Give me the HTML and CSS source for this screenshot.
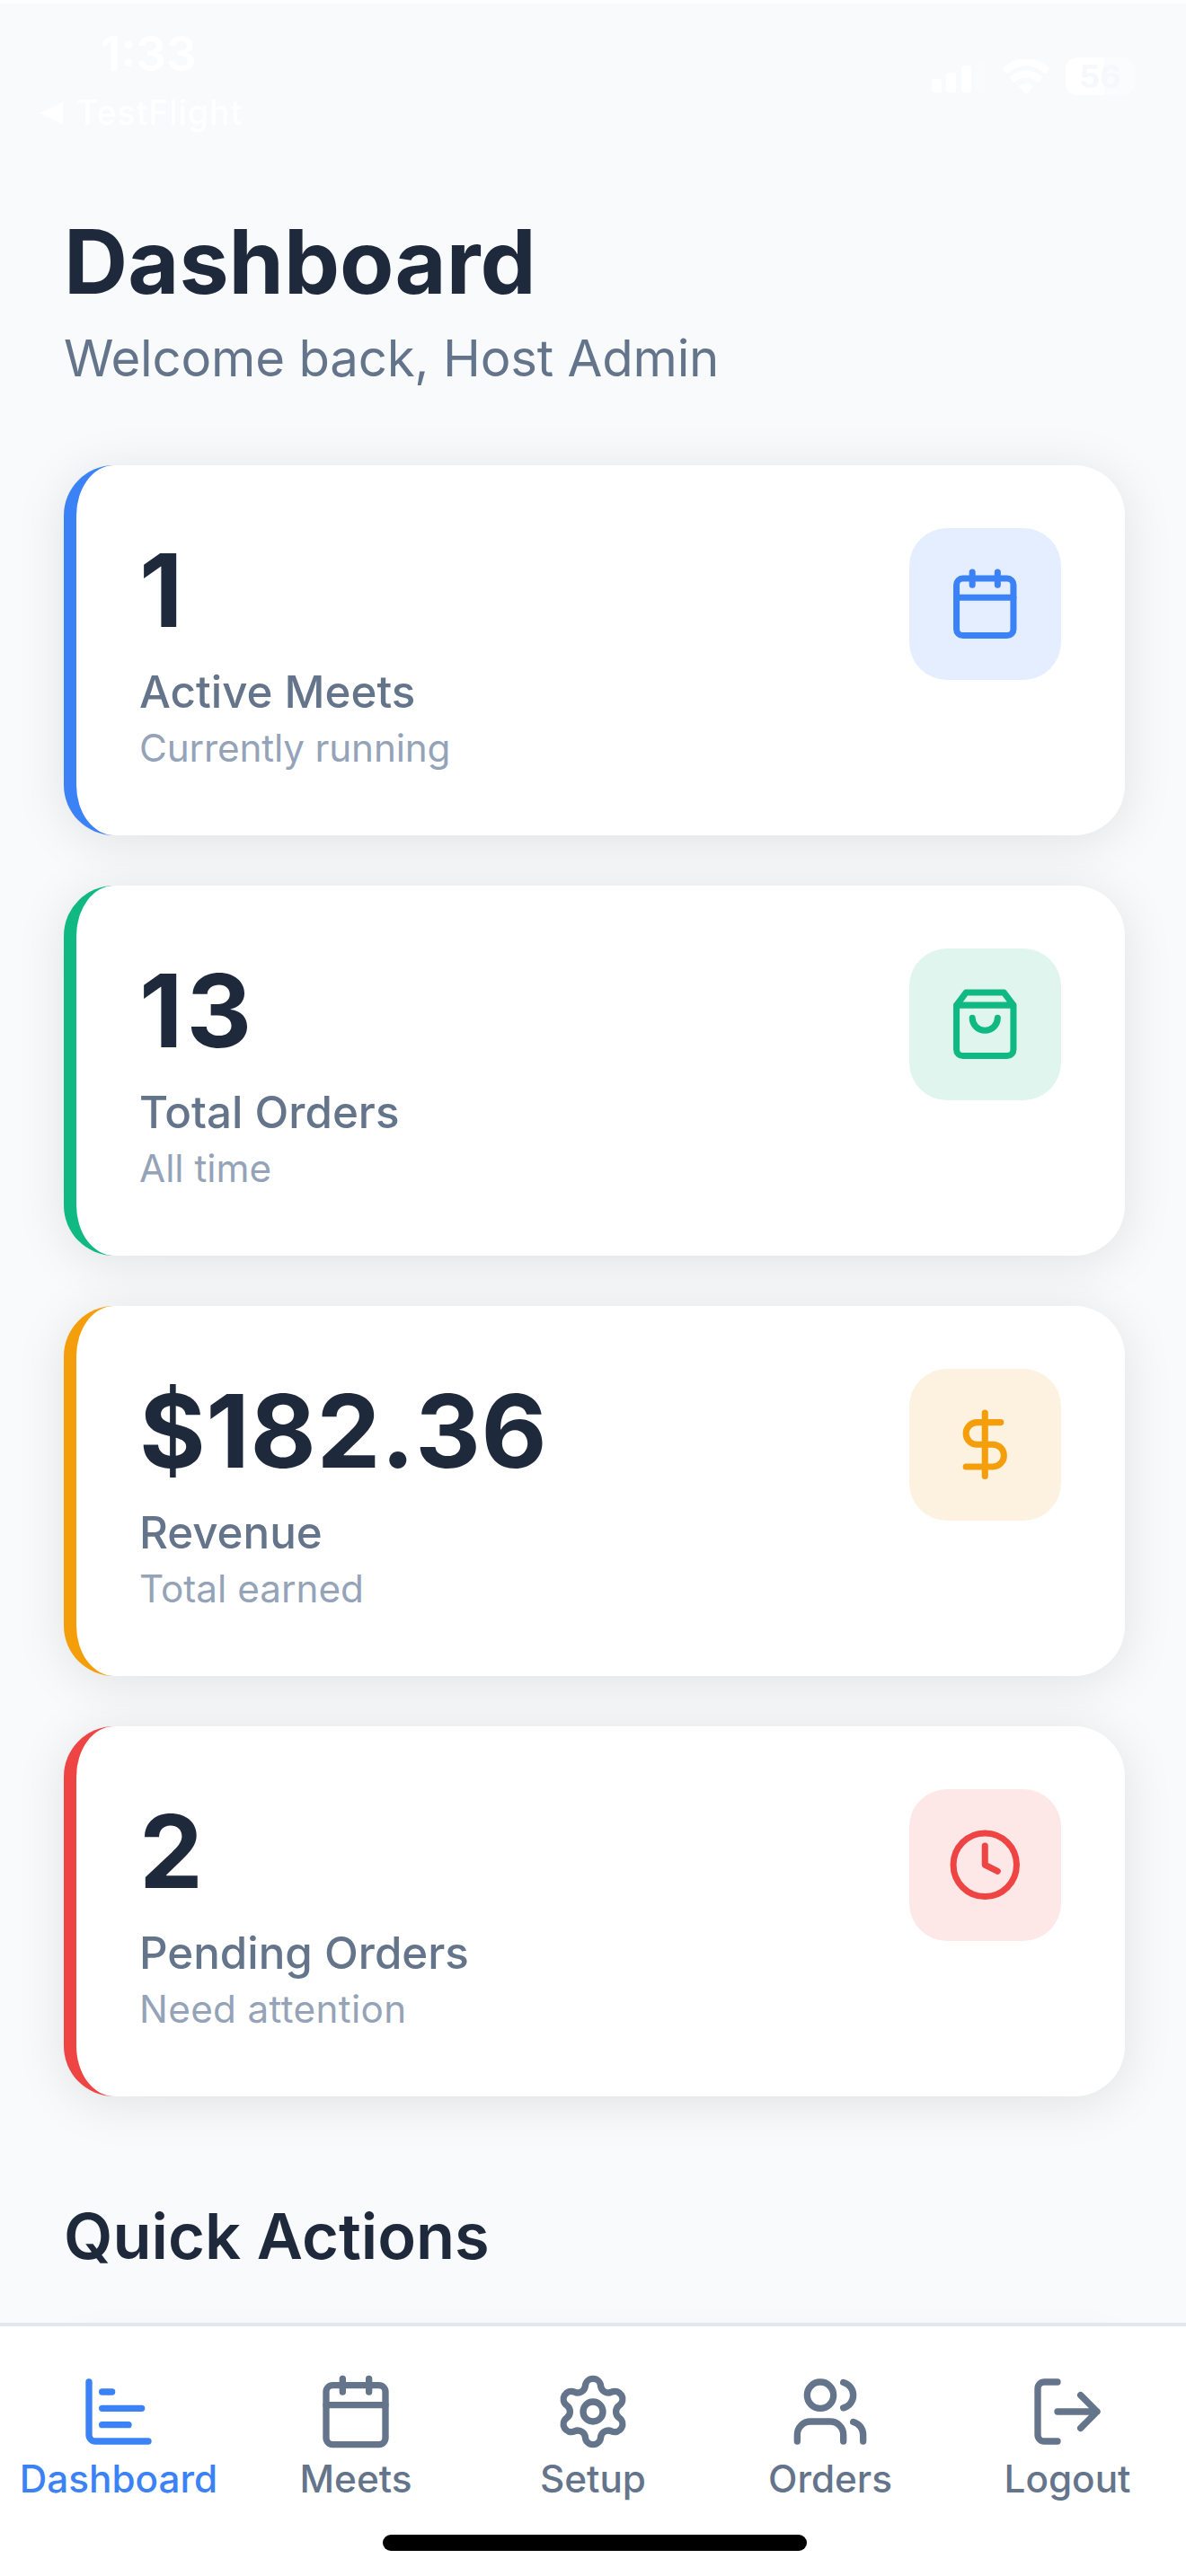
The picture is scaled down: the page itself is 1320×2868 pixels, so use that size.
FILE: index.html
```html
<!DOCTYPE html>
<html lang="en">
<head>
<meta charset="utf-8">
<title>Dashboard</title>
<link rel="stylesheet" href="styles.css">
</head>
<body>
<div class="screen">
  <header class="status">
    <div class="status-left">
      <div class="time">1:33</div>
      <div class="back"><svg class="back-arrow" viewBox="0 0 26 24"><path d="M0 12 26 0v24z"/></svg>TestFlight</div>
    </div>
    <div class="status-right">
      <svg class="signal" viewBox="0 0 60 36"><rect x="0" y="21" width="11" height="15" rx="3"/><rect x="16" y="14" width="11" height="22" rx="3"/><rect x="33" y="6" width="11" height="30" rx="3"/><rect x="49" y="0" width="11" height="36" rx="3" opacity=".3"/></svg>
      <svg class="wifi" viewBox="0 0 54 39"><path d="M27 39 19 30q8-6 16 0z"/><path d="M3 13q24-20 48 0M11 23q16-13 32 0" fill="none" stroke="#fff" stroke-width="8"/></svg>
      <div class="battery">56</div>
    </div>
  </header>

  <main class="content">
    <h1 class="title">Dashboard</h1>
    <p class="subtitle">Welcome back, Host Admin</p>

    <section class="cards">
      <article class="card blue">
        <div class="info">
          <div class="value">1</div>
          <div class="label">Active Meets</div>
          <div class="note">Currently running</div>
        </div>
        <div class="badge"><svg class="icon" viewBox="0 0 24 24"><path d="M8 2v4M16 2v4M3 10h18"/><rect x="3" y="4" width="18" height="18" rx="2"/></svg></div>
      </article>
      <article class="card green">
        <div class="info">
          <div class="value">13</div>
          <div class="label">Total Orders</div>
          <div class="note">All time</div>
        </div>
        <div class="badge"><svg class="icon" viewBox="0 0 24 24"><path d="M6 2 3 6v14a2 2 0 0 0 2 2h14a2 2 0 0 0 2-2V6l-3-4ZM3 6h18M16 10a4 4 0 0 1-8 0"/></svg></div>
      </article>
      <article class="card amber">
        <div class="info">
          <div class="value">$182.36</div>
          <div class="label">Revenue</div>
          <div class="note">Total earned</div>
        </div>
        <div class="badge"><svg class="icon" viewBox="0 0 24 24"><path d="M12 2v20M17 5H9.500a3.500 3.500 0 0 0 0 7h5a3.500 3.500 0 0 1 0 7H6"/></svg></div>
      </article>
      <article class="card red">
        <div class="info">
          <div class="value">2</div>
          <div class="label">Pending Orders</div>
          <div class="note">Need attention</div>
        </div>
        <div class="badge"><svg class="icon" viewBox="0 0 24 24"><circle cx="12" cy="12" r="10"/><path d="M12 6v6l4 2"/></svg></div>
      </article>
    </section>

    <h2 class="section-title">Quick Actions</h2>
    <div class="action"></div>
  </main>

  <nav class="tabs">
    <div class="tab-row">
      <a class="tab active"><svg class="icon" viewBox="0 0 24 24"><path d="M3 3v16a2 2 0 0 0 2 2h16M7 16h8M7 11h12M7 6h3"/></svg><span>Dashboard</span></a>
      <a class="tab"><svg class="icon" viewBox="0 0 24 24"><path d="M8 2v4M16 2v4M3 10h18"/><rect x="3" y="4" width="18" height="18" rx="2"/></svg><span>Meets</span></a>
      <a class="tab"><svg class="icon" viewBox="0 0 24 24"><path d="M9.671 4.136a2.340 2.340 0 0 1 4.659 0 2.340 2.340 0 0 0 3.319 1.915 2.340 2.340 0 0 1 2.330 4.033 2.340 2.340 0 0 0 0 3.831 2.340 2.340 0 0 1-2.330 4.033 2.340 2.340 0 0 0-3.319 1.915 2.340 2.340 0 0 1-4.659 0 2.340 2.340 0 0 0-3.320-1.915 2.340 2.340 0 0 1-2.330-4.033 2.340 2.340 0 0 0 0-3.831A2.340 2.340 0 0 1 6.350 6.051a2.340 2.340 0 0 0 3.319-1.915"/><circle cx="12" cy="12" r="3"/></svg><span>Setup</span></a>
      <a class="tab"><svg class="icon" viewBox="0 0 24 24"><path d="M16 21v-2a4 4 0 0 0-4-4H6a4 4 0 0 0-4 4v2M16 3.128a4 4 0 0 1 0 7.744M22 21v-2a4 4 0 0 0-3-3.870"/><circle cx="9" cy="7" r="4"/></svg><span>Orders</span></a>
      <a class="tab"><svg class="icon" viewBox="0 0 24 24"><path d="m16 17 5-5-5-5M21 12H9M9 21H5a2 2 0 0 1-2-2V5a2 2 0 0 1 2-2h4"/></svg><span>Logout</span></a>
    </div>
    <div class="home-bar"></div>
  </nav>
</div>
</body>
</html>
```

FILE: styles.css
```css
* { box-sizing: border-box; margin: 0; padding: 0; }

body {
  font-family: Inter, "Liberation Sans", sans-serif;
  background: #f8fafc;
}

.screen {
  display: flex;
  flex-direction: column;
  width: 1320px;
  height: 2868px;
  overflow: hidden;
  background: #f8fafc;
}

/* Status bar */
.status {
  display: flex;
  justify-content: space-between;
  flex: none;
  height: 232px;
  padding: 30px 50px 0 44px;
  border-top: 4px solid #fefefe;
  color: #fff;
}

.time {
  padding-left: 68px;
  font-size: 53px;
  font-weight: 600;
  line-height: 52px;
}

.back {
  display: flex;
  align-items: center;
  gap: 15px;
  margin-top: 14px;
  font-size: 37.5px;
  font-weight: 500;
  line-height: 52px;
  letter-spacing: 0.9px;
}

.back-arrow { width: 26px; height: 24px; fill: #fff; }

.status-right {
  display: flex;
  align-items: center;
  height: 42px;
  margin-top: 30px;
  fill: #fff;
}

.signal { width: 60px; height: 36px; margin-right: 18px; }
.wifi { width: 54px; height: 39px; margin-right: 17px; }

.battery {
  width: 77px;
  height: 42px;
  margin-right: 7px;
  border-radius: 13px;
  background: linear-gradient(90deg, #fff 56%, #fbfcfe 56%);
  color: #f6f8fb;
  font-size: 36px;
  font-weight: 700;
  line-height: 42px;
  text-align: center;
}

/* Page content */
.content {
  flex: 1;
  min-height: 0;
  overflow: hidden;
  padding: 0 68px 0 71px;
}

.title {
  color: #1e293b;
  font-size: 98.56px;
  font-weight: 700;
  line-height: 120px;
}

.subtitle {
  margin-top: 13px;
  color: #64748b;
  font-size: 56.32px;
  line-height: 68px;
  letter-spacing: -0.2px;
}

.cards {
  display: flex;
  flex-direction: column;
  gap: 56px;
  margin-top: 85px;
}

.card {
  display: flex;
  justify-content: space-between;
  align-items: flex-start;
  height: 412px;
  padding: 70px 71px 0 70px;
  border-left: 14px solid var(--accent);
  border-radius: 56px;
  background: #fff;
  box-shadow: 0 7px 56px rgba(0, 0, 0, 0.1);
}

.blue { --accent: #3b82f6; --tint: #e4eefe; }
.green { --accent: #10b981; --tint: #e0f5ee; }
.amber { --accent: #f59e0b; --tint: #fdf2e0; }
.red { --accent: #ef4444; --tint: #fde7e7; }

.info { padding-top: 13px; }

.value {
  color: #1e293b;
  font-size: 112.64px;
  font-weight: 700;
  line-height: 112px;
  font-kerning: none;
}

.green .value { letter-spacing: 4px; }
.amber .value { letter-spacing: 0.6px; }

.label {
  margin-top: 27px;
  color: #64748b;
  font-size: 49.28px;
  font-weight: 500;
  line-height: 60px;
}

.note {
  margin-top: 7px;
  color: #94a3b8;
  font-size: 42.24px;
  line-height: 52px;
}

.blue .note { letter-spacing: -0.15px; }
.red .note { letter-spacing: 0.35px; }

.badge {
  display: flex;
  align-items: center;
  justify-content: center;
  width: 169px;
  height: 169px;
  border-radius: 42px;
  background: var(--tint);
  color: var(--accent);
}

.icon {
  display: block;
  width: 84.5px;
  height: 84.5px;
  fill: none;
  stroke: currentColor;
  stroke-width: 2;
  stroke-linecap: round;
  stroke-linejoin: round;
}

.section-title {
  margin-top: 113px;
  color: #1e293b;
  font-size: 70.4px;
  font-weight: 600;
  line-height: 86px;
}

.action {
  height: 200px;
  margin-top: 70px;
  border-radius: 42px;
  background: #fff;
  box-shadow: 0 7px 50px rgba(0, 0, 0, 0.08);
}

/* Bottom tab bar */
.tabs {
  position: relative;
  display: flex;
  flex-direction: column;
  align-items: center;
  flex: none;
  height: 282px;
  border-top: 4px solid #e2e8f0;
  background: #fff;
}

.tab-row {
  display: flex;
  width: 100%;
  height: 232px;
  padding-top: 51px;
}

.tab {
  display: flex;
  flex: 1;
  flex-direction: column;
  align-items: center;
  color: #64748b;
  font-size: 42.24px;
  font-weight: 500;
  line-height: 52px;
}

.tab .icon { width: 88px; height: 88px; margin-bottom: 5px; }
.tab.active { color: #3b82f6; }

.home-bar {
  width: 472px;
  height: 18px;
  margin-left: 3px;
  border-radius: 9px;
  background: #000;
}
```
